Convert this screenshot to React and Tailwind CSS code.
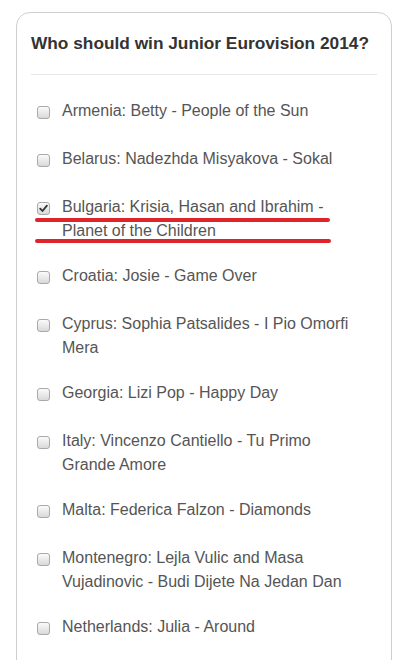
const entries = [
  { id: "am", label: "Armenia: Betty - People of the Sun" },
  { id: "by", label: "Belarus: Nadezhda Misyakova - Sokal" },
  { id: "bg", label: "Bulgaria: Krisia, Hasan and Ibrahim - Planet of the Children", checked: true, marked: true },
  { id: "hr", label: "Croatia: Josie - Game Over" },
  { id: "cy", label: "Cyprus: Sophia Patsalides - I Pio Omorfi Mera" },
  { id: "ge", label: "Georgia: Lizi Pop - Happy Day" },
  { id: "it", label: "Italy: Vincenzo Cantiello - Tu Primo Grande Amore" },
  { id: "mt", label: "Malta: Federica Falzon - Diamonds" },
  { id: "me", label: "Montenegro: Lejla Vulic and Masa Vujadinovic - Budi Dijete Na Jedan Dan" },
  { id: "nl", label: "Netherlands: Julia - Around" },
];

const Box = ({ checked }) => (
  <span className="mt-[7px] ml-[6px] flex h-[13px] w-[13px] shrink-0 items-center justify-center rounded-[3px] border border-[#a9a9a9] bg-gradient-to-b from-[#fbfbfb] to-[#d9d9d9]">
    {checked && (
      <svg width="9" height="9" viewBox="0 0 9 9">
        <path d="M1.2 4.6 L3.5 7 L7.9 1.6" fill="none" stroke="#333" strokeWidth="1.8" strokeLinecap="round" strokeLinejoin="round" />
      </svg>
    )}
  </span>
);

export default function App() {
  return (
    <div className="min-h-screen bg-white pt-[12px] font-['Liberation_Sans',Arial,sans-serif]">
      <div className="ml-[16px] w-[376px] rounded-[14px] border border-[#cfcfcf] px-[14px] pt-[19px] pb-[20px]">
        <h3 className="text-[17.3px] leading-[22px] font-bold text-[#333]">Who should win Junior Eurovision 2014?</h3>
        <div className="mt-[20px] border-t border-[#e8e8e8]" />
        <ul className="mt-[14px] pr-[16px]">
          {entries.map((e) => (
            <li key={e.id} className="relative flex min-h-[48px] items-start gap-[12px] pt-[10px] pb-[11px]">
              <Box checked={e.checked} />
              <span className="text-[16px] leading-[24px] text-[#555]">{e.label}</span>
              {e.marked && (
                <>
                  <span className="absolute left-[4px] top-[33px] h-[4px] w-[295px] rounded-full bg-[#e0232b]" />
                  <span className="absolute left-[4px] top-[54px] h-[4px] w-[296px] rounded-full bg-[#e0232b]" />
                </>
              )}
            </li>
          ))}
        </ul>
      </div>
    </div>
  );
}
